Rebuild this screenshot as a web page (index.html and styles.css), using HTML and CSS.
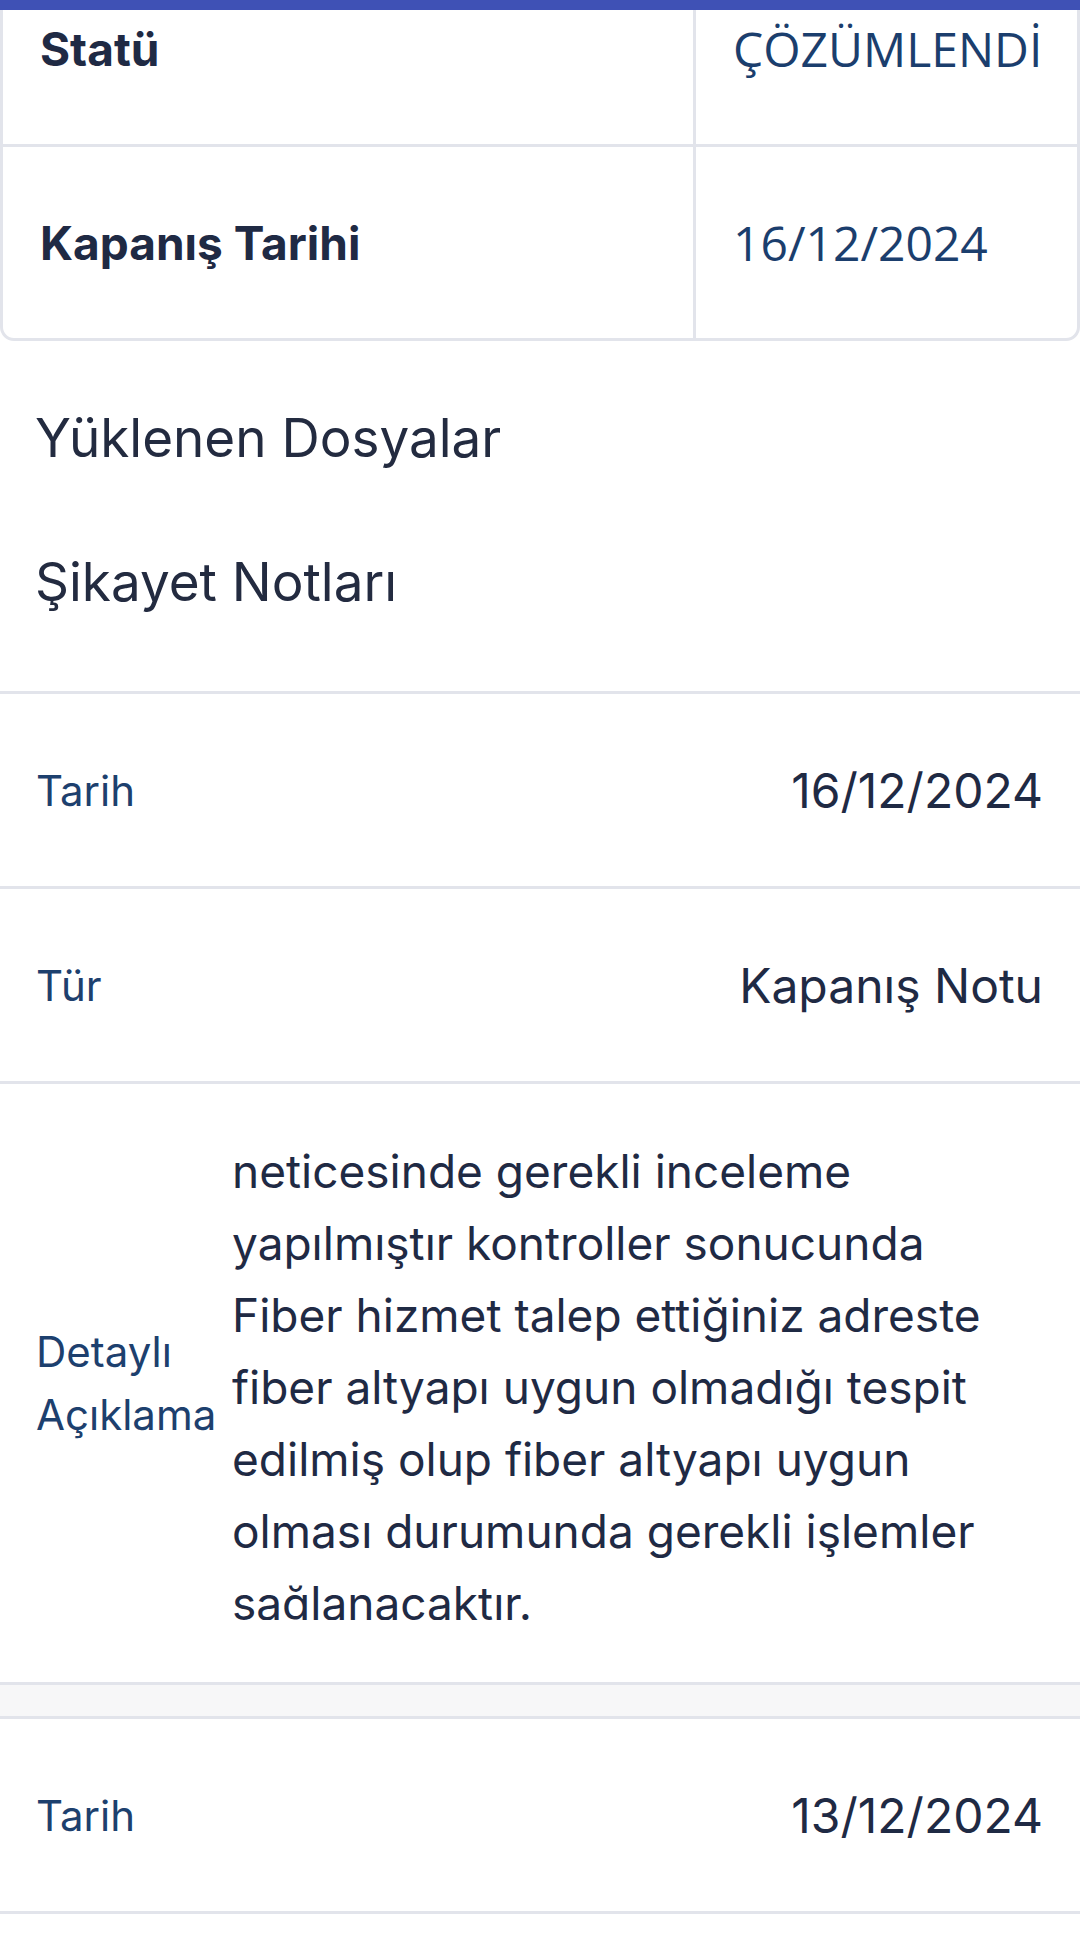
FILE: index.html
```html
<!DOCTYPE html>
<html lang="tr">
<head>
    <meta charset="UTF-8">
    <meta name="viewport" content="width=device-width, initial-scale=1.0">
    <title>Şikayet Detayı</title>
    <link rel="stylesheet" href="styles.css">
</head>
<body>
    <div class="app-bar"></div>

    <div class="page">
        <div class="info-card">
            <div class="info-row">
                <div class="info-label">Statü</div>
                <div class="info-value">ÇÖZÜMLENDİ</div>
            </div>
            <div class="info-row">
                <div class="info-label">Kapanış Tarihi</div>
                <div class="info-value">16/12/2024</div>
            </div>
        </div>

        <div class="titles">
            <h3 class="section-title">Yüklenen Dosyalar</h3>
            <h3 class="section-title">Şikayet Notları</h3>
        </div>

        <div class="notes">
            <div class="note">
                <div class="note-row">
                    <span class="note-label">Tarih</span>
                    <span class="note-value">16/12/2024</span>
                </div>
                <div class="note-row">
                    <span class="note-label">Tür</span>
                    <span class="note-value">Kapanış Notu</span>
                </div>
                <div class="note-row detail">
                    <span class="note-label detail-label">Detaylı Açıklama</span>
                    <p class="detail-text">neticesinde gerekli inceleme yapılmıştır kontroller sonucunda Fiber hizmet talep ettiğiniz adreste fiber altyapı uygun olmadığı tespit edilmiş olup fiber altyapı uygun olması durumunda gerekli işlemler sağlanacaktır.</p>
                </div>
            </div>
            <div class="note">
                <div class="note-row">
                    <span class="note-label">Tarih</span>
                    <span class="note-value">13/12/2024</span>
                </div>
            </div>
        </div>
    </div>
</body>
</html>
```

FILE: styles.css
```css
body { margin: 0; background: #fff; font-family: Inter, "Noto Sans", sans-serif; color: #1f2a44; overflow: hidden; }

.app-bar { height: 10px; background: #3f51b5; position: relative; z-index: 2; }

/* content is scrolled a bit, first row sits under the bar */
.page { margin-top: -60px; }

.info-card { border: 3px solid #e2e4eb; border-radius: 0 0 14px 14px; }
.info-row { display: flex; height: 191px; }
.info-row + .info-row { border-top: 3px solid #e2e4eb; }
.info-label { width: 653px; padding-left: 37px; display: flex; align-items: center; font-weight: 700; font-size: 46px; border-right: 3px solid #e2e4eb; }
.info-value { flex: 1; padding-left: 37px; display: flex; align-items: center; font-family: "Open Sans", "Noto Sans", sans-serif; font-size: 48px; color: #1b3e6d; }

.titles { padding: 64px 35px 76px; display: flex; flex-direction: column; gap: 78px; }
.section-title { margin: 0; font-weight: 400; font-size: 53px; line-height: 66px; color: #232b40; }

.notes { background: #f7f7f8; display: flex; flex-direction: column; gap: 31px; }
.note { background: #fff; border-top: 3px solid #e2e4eb; }
.note-row { display: flex; align-items: center; justify-content: space-between; height: 192px; padding: 0 37px 0 36px; border-bottom: 3px solid #e2e4eb; }
.note-label { font-size: 42px; color: #1d406e; }
.note-value { font-size: 48px; color: #1f2a44; }

.note-row.detail { height: auto; padding: 51px 53px 62px 36px; justify-content: flex-start; }
.detail-label { width: 196px; flex-shrink: 0; line-height: 63px; margin-top: 11px; }
.detail-text { flex: 1; margin: 0; font-size: 46px; line-height: 72px; max-height: 485px; overflow: hidden; }
```
